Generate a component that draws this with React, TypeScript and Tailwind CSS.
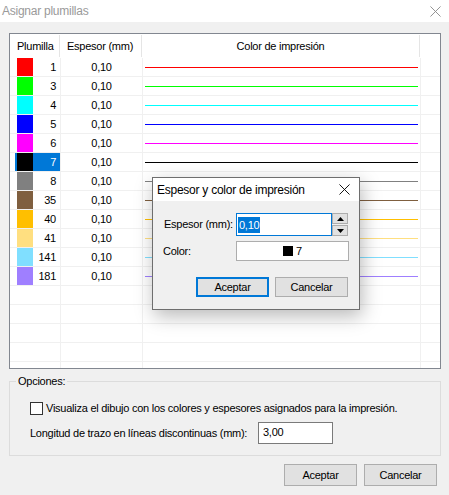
import React from 'react';

const pens = [
  { n: 1, color: '#ff0000' },
  { n: 3, color: '#00ff00' },
  { n: 4, color: '#00ffff' },
  { n: 5, color: '#0000ff' },
  { n: 6, color: '#ff00ff' },
  { n: 7, color: '#000000', selected: true },
  { n: 8, color: '#808080' },
  { n: 35, color: '#7f5f3f' },
  { n: 40, color: '#ffbf00' },
  { n: 41, color: '#ffdf80' },
  { n: 141, color: '#80dfff' },
  { n: 181, color: '#9f7fff' },
];

const emptyRows = [0, 1, 2, 3, 4];

function CloseX({ size, stroke }: { size: number; stroke: string }) {
  return (
    <svg width={size} height={size} viewBox="0 0 12 12">
      <path d="M0.5 0.5 L11.5 11.5 M11.5 0.5 L0.5 11.5" stroke={stroke} strokeWidth="1" fill="none" />
    </svg>
  );
}

function WinButton({ label, primary, className }: { label: string; primary?: boolean; className?: string }) {
  return (
    <button
      className={
        'flex items-center justify-center bg-[#e1e1e1] text-black whitespace-nowrap ' +
        (primary ? 'border-2 border-[#0078d7] ' : 'border border-[#adadad] ') +
        (className ?? '')
      }
    >
      {label}
    </button>
  );
}

function PenRow({ n, color, selected }: { n: number; color: string; selected?: boolean }) {
  return (
    <div className="flex h-[19px] shrink-0 border-b border-[#f0f0f0]">
      <div className="w-[51px] shrink-0 border-r border-[#f0f0f0] flex">
        {selected ? (
          <div className="ml-[5px] flex flex-1 bg-[#0078d7] pl-[2px]">
            <span className="w-[16px] h-[18px]" style={{ backgroundColor: color }} />
            <span className="flex-1 text-right pr-[4px] leading-[18px] text-white">{n}</span>
          </div>
        ) : (
          <div className="ml-[7px] flex flex-1">
            <span className="w-[16px] h-[18px]" style={{ backgroundColor: color }} />
            <span className="flex-1 text-right pr-[4px] leading-[18px]">{n}</span>
          </div>
        )}
      </div>
      <div className="w-[82px] shrink-0 border-r border-[#f0f0f0] text-center leading-[18px]">0,10</div>
      <div className="w-[278px] shrink-0 border-r border-[#f0f0f0] px-[2px] pt-[9px]">
        <div className="h-px" style={{ backgroundColor: color }} />
      </div>
      <div className="flex-1" />
    </div>
  );
}

function EmptyRow() {
  return (
    <div className="flex h-[19px] shrink-0 border-b border-[#f0f0f0]">
      <div className="w-[51px] shrink-0 border-r border-[#f0f0f0]" />
      <div className="w-[82px] shrink-0 border-r border-[#f0f0f0]" />
      <div className="w-[278px] shrink-0 border-r border-[#f0f0f0]" />
      <div className="flex-1" />
    </div>
  );
}

export default function App() {
  return (
    <div className="relative w-[449px] h-[495px] overflow-hidden bg-[#f0f0f0] font-['Liberation_Sans',Arial,sans-serif] text-[11px] tracking-[-0.25px] text-black whitespace-nowrap">
      {/* title bar */}
      <div className="h-[22px] bg-white flex items-center justify-between pl-[2px] pr-[8px]">
        <span className="text-[12px] text-[#9a9a9a]">Asignar plumillas</span>
        <CloseX size={11} stroke="#8a8a8a" />
      </div>

      {/* pen list */}
      <div className="ml-[9px] mt-[11px] w-[432px] h-[336px] border border-[#828790] bg-white flex flex-col overflow-hidden">
        <div className="flex h-[24px] shrink-0 py-[1px]">
          <div className="w-[50px] shrink-0 border-r border-[#e5e5e5] pl-[7px] leading-[22px]">Plumilla</div>
          <div className="w-[82px] shrink-0 border-r border-[#e5e5e5] pl-[7px] leading-[22px]">Espesor (mm)</div>
          <div className="w-[278px] shrink-0 border-r border-[#e5e5e5] text-center leading-[22px]">Color de impresión</div>
          <div className="flex-1" />
        </div>
        {pens.map((p) => (
          <PenRow key={p.n} n={p.n} color={p.color} selected={p.selected} />
        ))}
        {emptyRows.map((i) => (
          <EmptyRow key={i} />
        ))}
      </div>

      {/* options group */}
      <div className="relative ml-[9px] mt-[12px] w-[432px] border border-[#dcdcdc] pl-[20px] pt-[20px] pb-[11px]">
        <span className="absolute -top-[8px] left-[6px] bg-[#f0f0f0] px-[2px] leading-[14px]">Opciones:</span>
        <div className="flex items-center h-[13px]">
          <span className="w-[13px] h-[13px] border border-[#333333] bg-white shrink-0" />
          <span className="ml-[3px]">Visualiza el dibujo con los colores y espesores asignados para la impresión.</span>
        </div>
        <div className="flex items-center mt-[7px] h-[22px]">
          <span className="w-[228px] shrink-0">Longitud de trazo en líneas discontinuas (mm):</span>
          <div className="w-[75px] h-[22px] border border-[#7a7a7a] bg-white pl-[4px] leading-[18px]">3,00</div>
        </div>
      </div>

      {/* bottom buttons */}
      <div className="flex justify-end gap-[7px] mt-[8px] pr-[12px]">
        <WinButton label="Aceptar" className="w-[73px] h-[22px]" />
        <WinButton label="Cancelar" className="w-[73px] h-[22px]" />
      </div>

      {/* modal dialog */}
      <div className="absolute left-[152px] top-[177px] w-[208px] h-[133px] border border-[#6e6e6e] bg-[#f0f0f0] shadow-[2px_6px_18px_rgba(0,0,0,0.28)] flex flex-col">
        <div className="h-[23px] bg-white flex items-center justify-between pl-[4px] pr-[9px] shrink-0">
          <span className="text-[12px]">Espesor y color de impresión</span>
          <CloseX size={11} stroke="#000000" />
        </div>
        <div className="flex flex-col pt-[12px]">
          <div className="flex items-center h-[23px] pl-[11px]">
            <span className="w-[72px] shrink-0">Espesor (mm):</span>
            <div className="w-[96px] h-[23px] border border-[#0078d7] bg-white flex items-center pl-[1px]">
              <span className="bg-[#0078d7] text-white px-[1px] leading-[16px]">0,10</span>
            </div>
            <div className="w-[16px] h-[23px] flex flex-col gap-px">
              <div className="flex-1 border border-[#adadad] bg-[#e1e1e1] flex items-center justify-center">
                <svg width="7" height="4" viewBox="0 0 7 4"><path d="M3.5 0 L7 4 L0 4 Z" fill="#000" /></svg>
              </div>
              <div className="flex-1 border border-[#adadad] bg-[#e1e1e1] flex items-center justify-center">
                <svg width="7" height="4" viewBox="0 0 7 4"><path d="M0 0 L7 0 L3.5 4 Z" fill="#000" /></svg>
              </div>
            </div>
          </div>
          <div className="flex items-center h-[20px] mt-[5px] pl-[10px]">
            <span className="w-[73px] shrink-0">Color:</span>
            <div className="w-[113px] h-[20px] border border-[#adadad] bg-white flex items-center justify-center gap-[3px]">
              <span className="w-[10px] h-[10px] bg-black" />
              <span>7</span>
            </div>
          </div>
          <div className="flex gap-[6px] mt-[16px] pl-[43px]">
            <WinButton label="Aceptar" primary className="w-[73px] h-[20px]" />
            <WinButton label="Cancelar" className="w-[73px] h-[20px]" />
          </div>
        </div>
      </div>
    </div>
  );
}
